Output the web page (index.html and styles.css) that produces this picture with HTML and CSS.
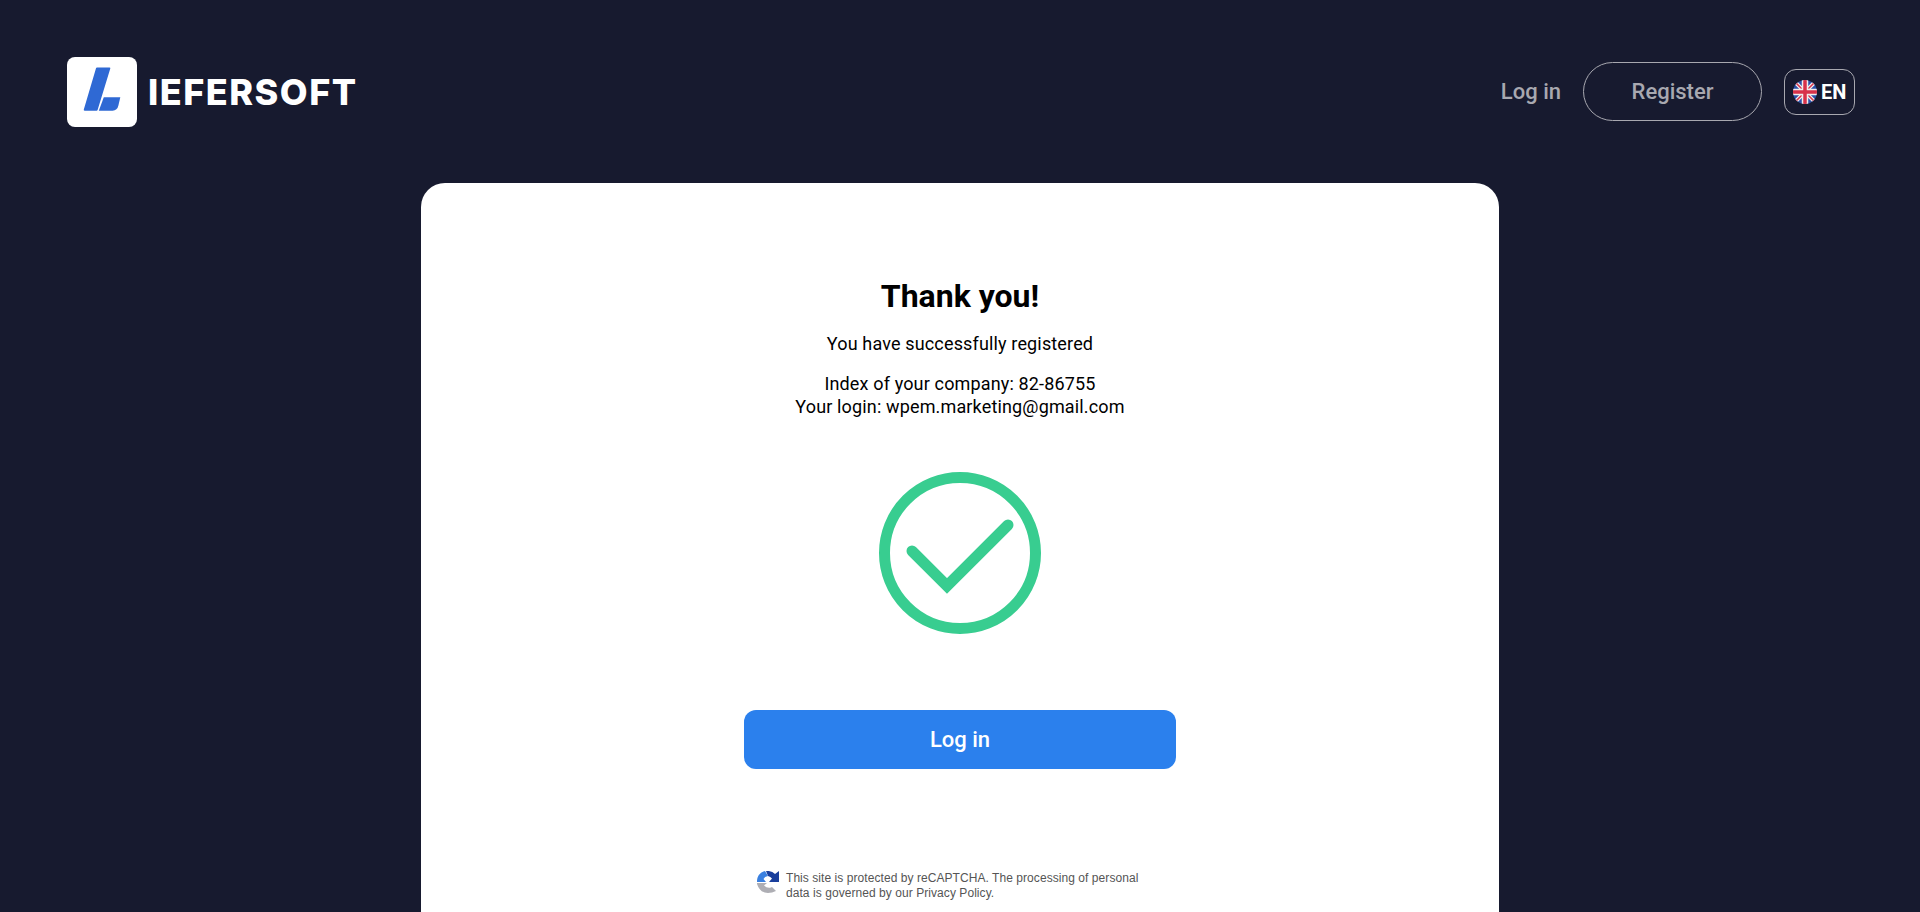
FILE: index.html
```html
<!DOCTYPE html>
<html lang="en">
<head>
    <meta charset="UTF-8">
    <meta name="viewport" content="width=device-width, initial-scale=1.0">
    <title>Thank you</title>
    <link rel="stylesheet" href="styles.css">
</head>
<body>
    <header class="header">
        <a class="logo" href="#">
            <span class="logo-box">
                <svg width="70" height="70" viewBox="0 0 70 70">
                    <path d="M30 10.5 H42.500 Q43.600 10.500 43.300 11.500 L30.600 53 Q30.400 53.700 29.600 53.700 H17.600 Q16.400 53.700 16.800 52.600 L29 11.300 Q29.200 10.500 30 10.500 Z" fill="#2f69d4"/>
                    <path d="M36.800 40.300 H53.300 L51.400 48.600 Q50.200 53.700 45.600 53.700 H31.800 Z" fill="#2f69d4"/>
                </svg>
            </span>
            <span class="logo-text">IEFERSOFT</span>
        </a>
        <nav class="nav">
            <a class="nav-link" href="#">Log in</a>
            <a class="nav-register" href="#">Register</a>
            <button class="lang" type="button">
                <svg class="flag" width="24" height="24" viewBox="0 0 24 24">
                    <defs>
                        <clipPath id="flagClip"><circle cx="12" cy="12" r="12"/></clipPath>
                    </defs>
                    <g clip-path="url(#flagClip)">
                        <rect width="24" height="24" fill="#2a4fa8"/>
                        <path d="M0 0 L24 24 M24 0 L0 24" stroke="#eeeeee" stroke-width="4"/>
                        <path d="M0 0 L24 24 M24 0 L0 24" stroke="#d8324a" stroke-width="1.500"/>
                        <path d="M12 0 V24 M0 12 H24" stroke="#eeeeee" stroke-width="6.500"/>
                        <path d="M12 0 V24 M0 12 H24" stroke="#d8324a" stroke-width="3.500"/>
                    </g>
                </svg>
                <span>EN</span>
            </button>
        </nav>
    </header>

    <main class="card">
        <h1 class="card-title">Thank you!</h1>
        <p class="card-lead">You have successfully registered</p>
        <p class="card-info">Index of your company: 82-86755<br>Your login: wpem.marketing@gmail.com</p>

        <svg class="success-icon" width="162" height="162" viewBox="0 0 162 162">
            <circle cx="81" cy="81" r="75.500" fill="none" stroke="#38cd90" stroke-width="11"/>
            <path d="M33 79 L68 114 L129 53" fill="none" stroke="#38cd90" stroke-width="11" stroke-linecap="round"/>
        </svg>

        <button class="login-btn" type="button">Log in</button>

        <div class="recaptcha">
            <svg class="recaptcha-icon" width="22" height="22" viewBox="0 0 22 22">
                <path d="M0 11 C0 5 3 1.500 8 0 L11 5 Q7.500 5.500 6.500 8 L9 11 Z" fill="#3a80e0"/>
                <path d="M9 0 Q15 -0.500 18 3 L22 0 V11 H12 L15 7.500 Q13.500 5.500 11 5 Z" fill="#1a3f9c"/>
                <path d="M0 12 H10 L7 14.500 Q10 17.500 14 16.500 L15 16 L19 20 Q15 22 11 22 Q3 22 0 13 Z" fill="#aeaeb4"/>
            </svg>
            <p class="recaptcha-text">This site is protected by reCAPTCHA. The processing of personal<br>data is governed by our Privacy Policy.</p>
        </div>
    </main>
</body>
</html>
```

FILE: styles.css
```css
* {
    margin: 0;
    padding: 0;
    box-sizing: border-box;
}

html, body {
    height: 100%;
    overflow: hidden;
}

body {
    background: #171a2f;
    font-family: Roboto, Arial, sans-serif;
    color: #000;
}

a {
    text-decoration: none;
}

.header {
    height: 183px;
    padding: 0 65px 0 67px;
    display: flex;
    align-items: center;
    justify-content: space-between;
}

.logo {
    display: flex;
    align-items: center;
    gap: 11px;
}

.logo-box {
    width: 70px;
    height: 70px;
    background: #fff;
    border-radius: 8px;
    display: block;
}

.logo-box svg {
    display: block;
}

.logo-text {
    font-family: Inter, "Noto Sans", sans-serif;
    font-size: 36px;
    font-weight: 800;
    color: #fff;
    letter-spacing: 1.500px;
}

.nav {
    display: flex;
    align-items: center;
}

.nav-link {
    font-size: 22px;
    font-weight: 500;
    color: #a8a8b0;
    margin-right: 22px;
}

.nav-register {
    width: 179px;
    height: 59px;
    border: 1px solid #a8a8b0;
    border-radius: 30px;
    font-size: 22px;
    font-weight: 500;
    color: #a8a8b0;
    display: flex;
    align-items: center;
    justify-content: center;
    margin-right: 22px;
}

.lang {
    width: 71px;
    height: 46px;
    background: transparent;
    border: 1px solid #a8a8b0;
    border-radius: 12px;
    color: #fff;
    font-family: Roboto, Arial, sans-serif;
    font-size: 20px;
    font-weight: 700;
    display: flex;
    align-items: center;
    gap: 4px;
    padding-left: 8px;
}

.card {
    width: 1078px;
    height: 800px;
    margin: 0 auto;
    padding-top: 92px;
    background: #fff;
    border-radius: 24px;
    display: flex;
    flex-direction: column;
    align-items: center;
    text-align: center;
}

.card-title {
    font-size: 32px;
    line-height: 42px;
    font-weight: 700;
}

.card-lead {
    font-size: 18px;
    line-height: 23px;
    letter-spacing: 0.150px;
    margin-top: 15px;
}

.card-info {
    font-size: 18px;
    line-height: 23px;
    letter-spacing: 0.150px;
    margin-top: 17px;
}

.success-icon {
    margin-top: 54px;
    display: block;
}

.login-btn {
    width: 432px;
    height: 59px;
    margin-top: 76px;
    background: #2b80ed;
    border: none;
    border-radius: 12px;
    color: #fff;
    font-family: Roboto, Arial, sans-serif;
    font-size: 22px;
    font-weight: 500;
    cursor: pointer;
}

.recaptcha {
    width: 406px;
    margin-top: 102px;
    display: flex;
    gap: 7px;
    text-align: left;
}

.recaptcha-icon {
    flex-shrink: 0;
}

.recaptcha-text {
    font-family: "Liberation Sans", Arial, sans-serif;
    font-size: 12px;
    line-height: 15px;
    letter-spacing: 0.060px;
    color: #555;
}
```
